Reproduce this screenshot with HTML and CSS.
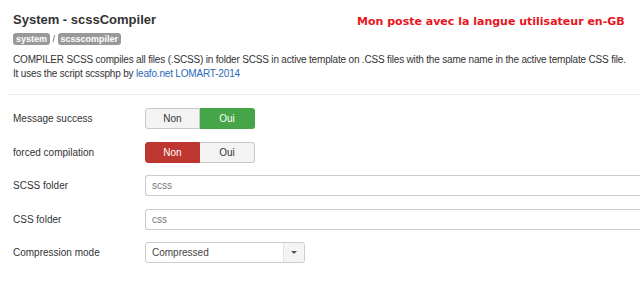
FILE: index.html
```html
<!DOCTYPE html>
<html>
<head>
  <title>System - scssCompiler</title>
  <link rel="stylesheet" href="styles.css">
</head>
<body>
  <div class="page">
    <div class="header">
      <h1>System - scssCompiler</h1>
      <span class="note">Mon poste avec la langue utilisateur en-GB</span>
    </div>
    <div class="tags">
      <span class="badge">system</span> / <span class="badge">scsscompiler</span>
    </div>
    <p class="desc">
      COMPILER SCSS compiles all files (.SCSS) in folder SCSS in active template on .CSS files with the same name in the active template CSS file.<br>
      It uses the script scssphp by <a href="#">leafo.net</a> <a href="#">LOMART-2014</a>
    </p>
    <hr>
    <div class="form">
      <div class="row">
        <label>Message success</label>
        <div class="toggle">
          <button class="btn">Non</button>
          <button class="btn on-yes">Oui</button>
        </div>
      </div>
      <div class="row">
        <label>forced compilation</label>
        <div class="toggle">
          <button class="btn on-no">Non</button>
          <button class="btn">Oui</button>
        </div>
      </div>
      <div class="row">
        <label>SCSS folder</label>
        <input type="text" class="field" value="scss">
      </div>
      <div class="row">
        <label>CSS folder</label>
        <input type="text" class="field" value="css">
      </div>
      <div class="row">
        <label>Compression mode</label>
        <div class="select">
          <span class="select-value">Compressed</span>
          <span class="select-arrow"></span>
        </div>
      </div>
    </div>
  </div>
</body>
</html>
```
FILE: styles.css
```css
body {
  margin: 0;
  font-family: "Liberation Sans", Arial, sans-serif;
  font-size: 10px;
  color: #333;
  background: #fff;
  overflow: hidden;
}

.page {
  padding: 12px 0 0 13px;
}

.header {
  display: flex;
  align-items: baseline;
}

h1 {
  margin: 0;
  font-size: 13px;
  font-weight: bold;
  color: #333;
  line-height: 16px;
}

.note {
  margin-left: 201px;
  color: #e8141b;
  font-family: "DejaVu Sans", sans-serif;
  font-weight: bold;
  font-size: 11px;
  position: relative;
  top: 1px;
}

.tags {
  margin-top: 5px;
  font-size: 9px;
  color: #555;
  line-height: 12px;
}

.badge {
  display: inline-block;
  background: #999;
  color: #fff;
  font-weight: bold;
  border-radius: 3px;
  padding: 0 3px;
}

.desc {
  margin: 8px 0 0;
  line-height: 14px;
  color: #333;
  letter-spacing: -0.18px;
  white-space: nowrap;
}

.desc a {
  color: #2a69b8;
  text-decoration: none;
}

hr {
  border: 0;
  border-top: 1px solid #eee;
  margin: 13px 0 0 -5px;
}

.form {
  padding-top: 13px;
}

.row {
  display: flex;
  align-items: center;
  height: 21px;
  margin-bottom: 12.5px;
}

.row label {
  width: 132px;
}

.toggle {
  display: flex;
}

.btn {
  width: 55px;
  height: 21px;
  font-family: inherit;
  font-size: 10px;
  color: #333;
  background: #f3f3f3;
  border: 1px solid #c8c8c8;
  margin: 0;
  padding: 0;
}

.btn:first-child {
  border-radius: 3px 0 0 3px;
}

.btn:last-child {
  border-radius: 0 3px 3px 0;
  border-left: 0;
}

.btn.on-yes {
  background: #46a546;
  border-color: #46a546;
  color: #fff;
}

.btn.on-no {
  background: #bd362f;
  border-color: #bd362f;
  color: #fff;
}

.field {
  flex: 1;
  height: 21px;
  box-sizing: border-box;
  border: 1px solid #ccc;
  border-right: 0;
  border-radius: 3px 0 0 3px;
  padding: 0 6px;
  font-family: inherit;
  font-size: 10px;
  color: #777;
  margin-right: 0;
}

.select {
  display: flex;
  width: 160px;
  height: 21px;
  box-sizing: border-box;
  border: 1px solid #ccc;
  border-radius: 3px;
  overflow: hidden;
}

.select-value {
  flex: 1;
  padding: 0 6px;
  line-height: 19px;
  color: #444;
}

.select-arrow {
  width: 20px;
  background: #f4f4f4;
  border-left: 1px solid #e2e2e2;
  position: relative;
}

.select-arrow::after {
  content: "";
  position: absolute;
  left: 7px;
  top: 8px;
  border-left: 3px solid transparent;
  border-right: 3px solid transparent;
  border-top: 3px solid #555;
}
```
